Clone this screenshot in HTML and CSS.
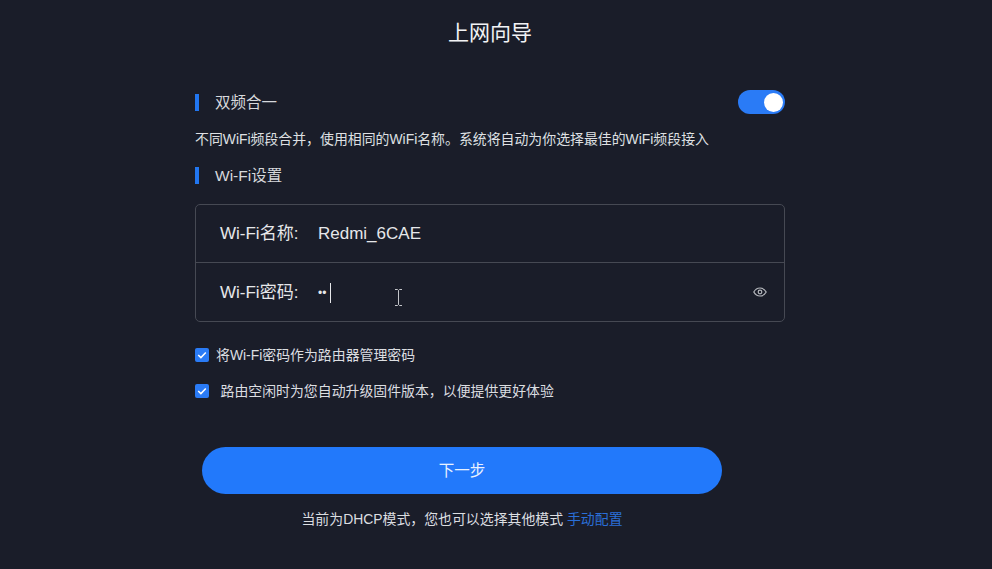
FILE: index.html
```html
<!DOCTYPE html>
<html lang="zh-CN">
<head>
  <meta charset="UTF-8">
  <meta name="viewport" content="width=device-width, initial-scale=1.0">
  <title>上网向导</title>
  <link rel="stylesheet" href="styles.css">
</head>
<body>

<div class="container">
  <h2>上网向导</h2>

  <div class="section-row">
    <div class="section-title">双频合一</div>
    <div class="switch"><span class="knob"></span></div>
  </div>
  <p class="hint">不同WiFi频段合并，使用相同的WiFi名称。系统将自动为你选择最佳的WiFi频段接入</p>
  <div class="section-title section-second">Wi-Fi设置</div>

  <div class="wifi-box">
    <div class="wifi-row">
      <span class="wifi-label">Wi-Fi名称:</span>
      <span class="wifi-value">Redmi_6CAE</span>
    </div>
    <div class="wifi-row wifi-row-last">
      <span class="wifi-label">Wi-Fi密码:</span>
      <span class="wifi-dots">••</span><span class="caret"></span>
      <svg class="ibeam" width="9" height="17" viewBox="0 0 9 17" fill="none" stroke="#c4c6ca" stroke-width="1">
        <path d="M1 .5h2.500l1 1 1-1H8M4.500 1.500v14M1 16.500h2.500l1-1 1 1H8"/>
      </svg>
      <svg class="eye" width="14" height="10" viewBox="0 0 14 10" fill="none" stroke="#b4b7bc" stroke-width="1.200">
        <path d="M.8 5C2.300 2.300 4.400 1 7 1s4.700 1.300 6.200 4C11.700 7.700 9.600 9 7 9S2.300 7.700.8 5z"/>
        <circle cx="7" cy="5" r="1.800"/>
      </svg>
    </div>
  </div>

  <div class="check-row check-first">
    <span class="checkbox">
      <svg width="14" height="14" viewBox="0 0 14 14" fill="none" stroke="#fff" stroke-width="1.500"><path d="M3.200 7l2.700 2.600 4.900-5"/></svg>
    </span>
    <span class="check-text">将Wi-Fi密码作为路由器管理密码</span>
  </div>
  <div class="check-row check-second">
    <span class="checkbox">
      <svg width="14" height="14" viewBox="0 0 14 14" fill="none" stroke="#fff" stroke-width="1.500"><path d="M3.200 7l2.700 2.600 4.900-5"/></svg>
    </span>
    <span class="check-text check-text-wide">路由空闲时为您自动升级固件版本，以便提供更好体验</span>
  </div>

  <div class="actions">
    <button type="button">下一步</button>
    <p class="mode">当前为DHCP模式，您也可以选择其他模式 <a href="#">手动配置</a></p>
  </div>
</div>

</body>
</html>
```

FILE: styles.css
```css
html, body {
  height: 100%;
}
body {
  font-family: "Liberation Sans", "Noto Sans CJK SC", sans-serif;
  margin: 0;
  background-color: #1a1d29;
  color: #e6e7ea;
  overflow: hidden;
}
.container {
  width: 590px;
  margin-left: 195px;
}
h2 {
  margin: 0;
  padding-top: 20px;
  font-size: 21px;
  line-height: 26px;
  font-weight: 400;
  color: #f2f3f5;
  text-align: center;
  width: 590px;
}
.section-row {
  display: flex;
  justify-content: space-between;
  align-items: center;
  margin-top: 44px;
  height: 24px;
}
.section-title {
  border-left: 4px solid #2176f0;
  padding-left: 16px;
  font-size: 15.5px;
  line-height: 17px;
  color: #d6d8dc;
}
.section-second {
  margin-top: 20px;
}
.switch {
  width: 47px;
  height: 24px;
  border-radius: 12px;
  background-color: #2a7bf6;
  display: flex;
  justify-content: flex-end;
  align-items: center;
  padding-right: 2px;
  box-sizing: border-box;
}
.knob {
  width: 19px;
  height: 19px;
  border-radius: 50%;
  background-color: #fff;
}
.hint {
  margin: 17px 0 0;
  font-size: 13.9px;
  line-height: 16px;
  color: #dfe0e3;
}
.wifi-box {
  margin-top: 20px;
  border: 1px solid #464953;
  border-radius: 5px;
  height: 118px;
  box-sizing: border-box;
}
.wifi-row {
  display: flex;
  align-items: center;
  height: 57px;
  padding-left: 24px;
  padding-right: 17px;
  border-bottom: 1px solid #464953;
  font-size: 17px;
  line-height: 20px;
  color: #e6e7ea;
}
.wifi-row-last {
  height: 59px;
  border-bottom: none;
}
.wifi-label {
  width: 98px;
}
.wifi-dots {
  font-size: 12px;
}
.caret {
  width: 1px;
  height: 20px;
  background-color: #e6e7ea;
  margin-left: 4px;
}
.ibeam {
  margin-left: 63px;
  margin-top: 10px;
}
.eye {
  margin-left: auto;
  margin-bottom: 2px;
}
.check-row {
  display: flex;
  align-items: center;
  font-size: 13.9px;
  line-height: 16px;
  color: #dcdee1;
}
.check-first {
  margin-top: 25px;
}
.check-second {
  margin-top: 20px;
}
.checkbox {
  width: 14px;
  height: 14px;
  border-radius: 2px;
  background-color: #2a7bf6;
  display: flex;
}
.check-text {
  margin-left: 7px;
}
.check-text-wide {
  margin-left: 11.5px;
}
.actions {
  width: 520px;
  margin-left: 7px;
  margin-top: 48px;
}
button {
  display: block;
  width: 100%;
  height: 47px;
  padding-bottom: 4px;
  border: none;
  border-radius: 24px;
  background-color: #2279fb;
  color: #e8f1ff;
  font-family: inherit;
  font-size: 15.5px;
  cursor: pointer;
}
.mode {
  margin: 17px 0 0;
  text-align: center;
  font-size: 13.9px;
  line-height: 16px;
  color: #dcdee1;
}
.mode a {
  color: #2a6fd8;
  text-decoration: none;
}
```
